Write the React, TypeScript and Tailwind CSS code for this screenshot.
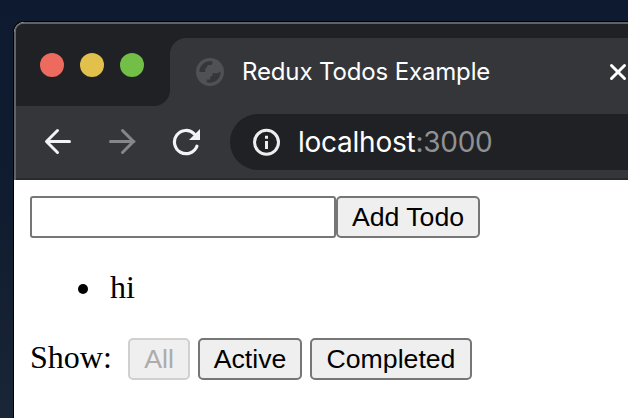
import type { ReactNode } from 'react';

function Light({ color }: { color: string }) {
  return <span className={`size-6 rounded-full ${color}`} />;
}

function Globe() {
  return (
    <svg className="size-7 shrink-0" viewBox="0 0 28 28">
      <circle cx="14" cy="14" r="14" fill="#505155" />
      <path
        d="M16.500 3.500v1.200c0 1.500-1 2.300-2.700 2.300h-1.600c-.6 0-.9.500-.9 1.200 0 1.200-.8 1.800-2 1.800v3.900H3.300C3.500 8.200 8 3.300 14 3.300c.9 0 1.700 0 2.500.2ZM24.600 14c0 6-4.700 10.700-10.600 10.700-1.100 0-2.200-.2-3.200-.5V21.600h3.400v-3.400h2.300v-3.300c2 0 3.200.7 4.800.3 1.200-.3 1.700-1.400 3.300-1.800Z"
        fill="#35363a"
      />
    </svg>
  );
}

function TabStrip() {
  return (
    <div className="flex h-[82px] bg-[#35363a]">
      <div className="flex h-full w-[154px] shrink-0 items-center gap-4 rounded-br-2xl bg-[#202124] pl-6">
        <Light color="bg-[#ed6a5e]" />
        <Light color="bg-[#e1c04c]" />
        <Light color="bg-[#72be47]" />
      </div>
      <div className="flex-1 bg-[#202124] pt-3.5">
        <div className="flex h-[68px] items-center rounded-tl-2xl bg-[#35363a] pl-[26px]">
          <Globe />
          <span className="ml-[18px] w-[367px] whitespace-nowrap font-['Inter',sans-serif] text-[24px] tracking-[-0.14px] text-white">
            Redux Todos Example
          </span>
          <svg className="size-[18px] shrink-0" viewBox="0 0 18 18" stroke="#fff" strokeWidth="3" strokeLinecap="round">
            <path d="M2.500 2.500l13 13M15.500 2.500l-13 13" />
          </svg>
        </div>
      </div>
    </div>
  );
}

function Toolbar() {
  return (
    <div className="flex h-[74px] items-center border-b-2 border-[#292a2c] bg-[#35363a] pl-7">
      <svg className="h-7 w-7 shrink-0" viewBox="0 0 28 28" fill="none" stroke="#f1f3f4" strokeWidth="3" strokeLinecap="round" strokeLinejoin="round">
        <path d="M25.500 13.500H3M13.500 2.500L2.500 13.500l11 11" />
      </svg>
      <svg className="ml-9 h-7 w-7 shrink-0" viewBox="0 0 28 28" fill="none" stroke="#86878a" strokeWidth="3" strokeLinecap="round" strokeLinejoin="round">
        <path d="M2.500 13.500H26M14.500 2.500l11 11-11 11" />
      </svg>
      <svg className="ml-9 h-7 w-7 shrink-0" viewBox="0 0 28 28" fill="none">
        <path d="M24.900 18.200A11.600 11.600 0 1 1 22.200 5.800" stroke="#f1f3f4" strokeWidth="3.200" strokeLinecap="round" />
        <path d="M28 1v11H17z" fill="#f1f3f4" />
      </svg>
      <div className="ml-[30px] flex h-14 flex-1 items-center rounded-l-full bg-[#202124] pl-[22px]">
        <svg className="size-7 shrink-0" viewBox="0 0 28 28" fill="none">
          <circle cx="14.500" cy="14.300" r="12" stroke="#eeeeef" strokeWidth="3" />
          <path d="M13 7.800h3v3h-3zM13 13h3v8h-3z" fill="#eeeeef" />
        </svg>
        <span className="ml-[18px] whitespace-nowrap font-['Inter',sans-serif] text-[28px] tracking-[-0.25px] text-white">
          localhost<span className="text-[#909193]">:3000</span>
        </span>
      </div>
    </div>
  );
}

function Button({ children, className, disabled }: { children: ReactNode; className: string; disabled?: boolean }) {
  return (
    <button
      disabled={disabled}
      className={`flex h-[42px] items-center justify-center rounded-[5px] border-2 border-[#767676] bg-[#efefef] font-['Liberation_Sans',Arial,sans-serif] text-[26.667px] text-black disabled:border-[#d0d0d0] disabled:text-[#acacac] ${className}`}
    >
      {children}
    </button>
  );
}

export default function App() {
  return (
    <div className="h-[418px] w-[628px] overflow-hidden bg-linear-to-b from-[#0d1a30] via-[#101c2f] to-[#192637] pl-[13px] pt-[21px] font-['Liberation_Serif',serif] text-[32px] text-black">
      <div className="h-[397px] overflow-hidden rounded-tl-[11px] border-l border-t border-black bg-white">
        <div className="overflow-hidden rounded-tl-[10px] border-l-2 border-t-2 border-[#626365] bg-[#202124]">
          <TabStrip />
          <Toolbar />
        </div>
        <main className="p-4">
          <div className="flex">
            <input className="h-[42px] w-[306px] rounded-[3px] border-2 border-[#767676] bg-white px-1 outline-none" />
            <Button className="w-36">Add Todo</Button>
          </div>
          <ul className="mb-[33px] mt-[31px] pl-12 leading-9">
            <li className="flex items-center gap-[22px] before:mt-1 before:size-2.5 before:rounded-full before:bg-black">hi</li>
          </ul>
          <div className="flex items-center">
            <span className="w-[98px] pb-1 leading-9">Show:</span>
            <div className="flex gap-2">
              <Button className="w-[62px]" disabled>All</Button>
              <Button className="w-[104px]">Active</Button>
              <Button className="w-[162px]">Completed</Button>
            </div>
          </div>
        </main>
      </div>
    </div>
  );
}
